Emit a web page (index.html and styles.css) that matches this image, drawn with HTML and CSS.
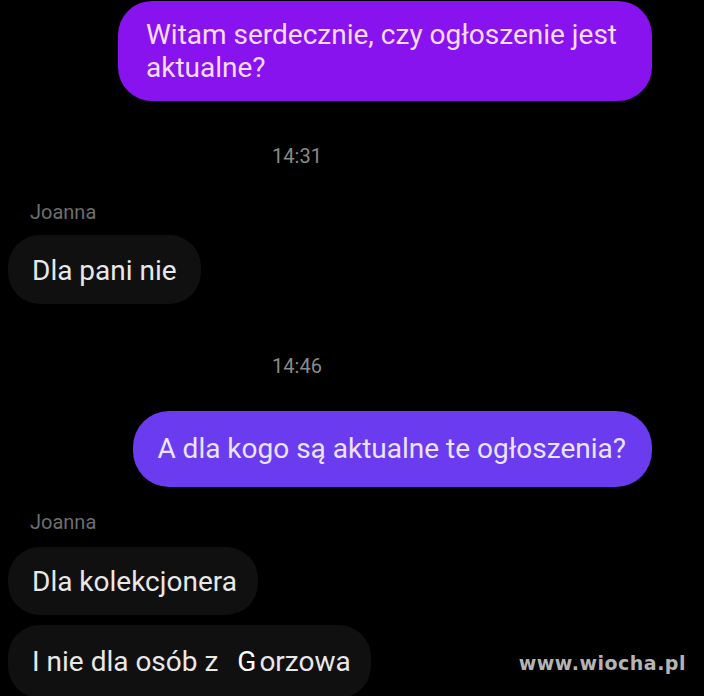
FILE: index.html
```html
<!DOCTYPE html>
<html lang="pl">
<head>
    <meta charset="UTF-8">
    <meta name="viewport" content="width=device-width, initial-scale=1.0">
    <title>Czat</title>
    <link rel="stylesheet" href="styles.css">
</head>
<body>

    <div class="chat">
        <!-- moja wiadomosc -->
        <div class="msg out">
            <div class="bubble violet">Witam serdecznie, czy ogłoszenie jest<br>aktualne?</div>
        </div>

        <div class="time t1">14:31</div>

        <div class="author a1">Joanna</div>
        <div class="msg in">
            <div class="bubble dark b1">Dla pani nie</div>
        </div>

        <div class="time t2">14:46</div>

        <div class="msg out">
            <div class="bubble blue">A dla kogo są aktualne te ogłoszenia?</div>
        </div>

        <div class="author a2">Joanna</div>
        <div class="msg in">
            <div class="bubble dark b2">Dla kolekcjonera</div>
        </div>
        <div class="msg in">
            <div class="bubble dark b3">I nie dla osób z <span class="city">G</span>orzowa</div>
        </div>
    </div>

    <div class="watermark">www.wiocha.pl</div>

</body>
</html>
```

FILE: styles.css
```css
/* General Styles */
body {
    background: #000;
    margin: 0;
    padding: 0;
    height: 696px;
    overflow: hidden;
    font-family: Roboto, "Liberation Sans", sans-serif;
    position: relative;
}

.chat {
    display: flex;
    flex-direction: column;
    padding: 1px 52px 0 8px;
}

.msg {
    display: flex;
}

.msg.out {
    justify-content: flex-end;
}

.msg.in {
    justify-content: flex-start;
}

.bubble {
    font-size: 28px;
    line-height: 33px;
    border-radius: 32px;
}

.bubble.violet {
    background-color: #8913ef;
    color: #f6dcf6;
    width: 478px;
    padding: 17px 28px;
    border-radius: 34px;
}

.bubble.blue {
    background-color: #6a3bef;
    color: #ebe4ff;
    padding: 21px 26px 22px 24px;
    border-radius: 36px;
}

.bubble.dark {
    background-color: #101010;
    color: #e8e8e8;
    padding: 0 24px;
}

.b1 {
    padding-top: 19px !important;
    padding-bottom: 17px !important;
}

.b2 {
    padding-top: 18px !important;
    padding-bottom: 17px !important;
    padding-right: 21px !important;
}

.b3 {
    margin-top: 10px;
    padding-top: 20px !important;
    padding-bottom: 20px !important;
    padding-right: 20px !important;
}

.city {
    color: #fff;
    margin-left: 12px;
    letter-spacing: 3px;
}

.time {
    width: 578px;
    text-align: center;
    color: #8a8a8a;
    font-size: 20px;
    line-height: 24px;
}

.t1 {
    margin-top: 43px;
}

.t2 {
    margin-top: 50px;
    margin-bottom: 33px;
}

.author {
    color: #6e6e6e;
    font-size: 20px;
    line-height: 24px;
    padding-left: 22px;
}

.a1 {
    margin-top: 32px;
    margin-bottom: 11px;
}

.a2 {
    margin-top: 23px;
    margin-bottom: 13px;
}

.watermark {
    position: absolute;
    right: 18px;
    bottom: 22px;
    font-family: "DejaVu Sans", sans-serif;
    font-weight: bold;
    font-size: 19px;
    color: #b4b4b4;
    letter-spacing: 0.5px;
}
```
